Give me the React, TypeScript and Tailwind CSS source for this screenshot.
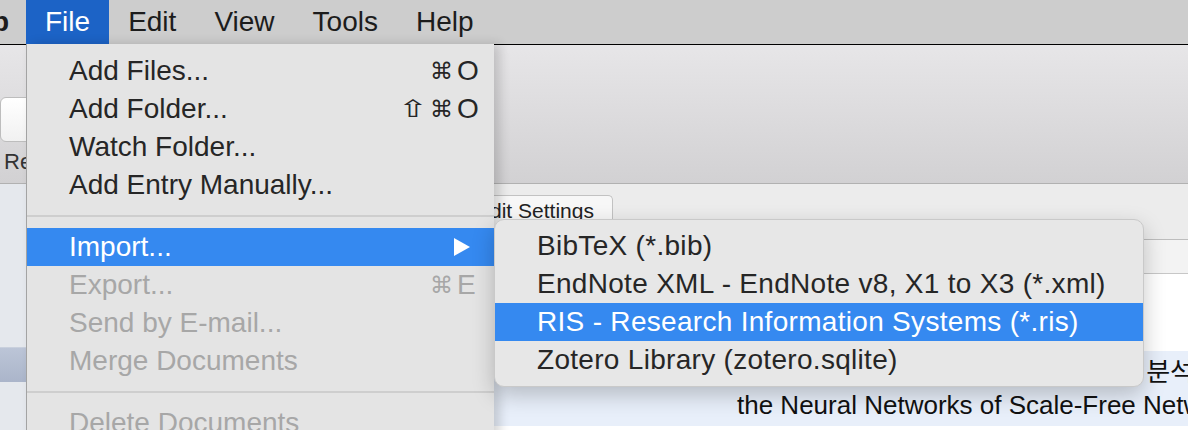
import React from 'react';

type MenuEntry =
  | { sep: true }
  | {
      sep?: false;
      label: string;
      mods?: string[];
      keyChar?: string;
      disabled?: boolean;
      active?: boolean;
      submenu?: boolean;
    };

const fileMenu: MenuEntry[] = [
  { label: 'Add Files...', mods: ['⌘'], keyChar: 'O' },
  { label: 'Add Folder...', mods: ['⇧', '⌘'], keyChar: 'O' },
  { label: 'Watch Folder...' },
  { label: 'Add Entry Manually...' },
  { sep: true },
  { label: 'Import...', active: true, submenu: true },
  { label: 'Export...', mods: ['⌘'], keyChar: 'E', disabled: true },
  { label: 'Send by E-mail...', disabled: true },
  { label: 'Merge Documents', disabled: true },
  { sep: true },
  { label: 'Delete Documents', disabled: true },
];

const importMenu = [
  { label: 'BibTeX (*.bib)' },
  { label: 'EndNote XML - EndNote v8, X1 to X3 (*.xml)' },
  { label: 'RIS - Research Information Systems (*.ris)', active: true },
  { label: 'Zotero Library (zotero.sqlite)' },
];

const menuBar = ['File', 'Edit', 'View', 'Tools', 'Help'];

// sidebar rows sit under the open menu, only their backgrounds show
const sidebarRows = ['library', 'all', 'recent', 'read', 'unsorted'];

function SubmenuArrow() {
  return (
    <svg width="18" height="18" viewBox="0 0 18 18" className="shrink-0">
      <polygon points="1,0 17,9 1,18" fill="white" />
    </svg>
  );
}

function FileMenu() {
  return (
    <div className="absolute left-[26px] top-[44px] h-[400px] w-[468px] border-l border-[#a3a3a3] bg-[#e4e4e4] pt-[8px] shadow-[6px_0_10px_rgba(0,0,0,0.16)]">
      {fileMenu.map((item, i) =>
        item.sep ? (
          <div key={i} className="flex h-[24px] items-center">
            <div className="h-[2px] w-full bg-[#cecece]" />
          </div>
        ) : (
          <div
            key={i}
            className={
              'flex h-[38px] items-center pl-[42px] pr-[15px] ' +
              (item.active
                ? 'bg-[#3589f0] text-white'
                : item.disabled
                  ? 'text-[#a7a7a7]'
                  : 'text-[#262626]')
            }
          >
            <span className="flex-1 whitespace-nowrap">{item.label}</span>
            {item.submenu && (
              <span className="pr-[8px]">
                <SubmenuArrow />
              </span>
            )}
            {item.keyChar && (
              <span className="flex items-center">
                {item.mods?.map((m) => (
                  <span
                    key={m}
                    className={
                      m === '⇧'
                        ? 'mr-[7px] inline-block scale-x-[1.5] text-[24px]'
                        : 'inline-block text-[23px]'
                    }
                  >
                    {m}
                  </span>
                ))}
                <span className="ml-[4px] w-[22px]">{item.keyChar}</span>
              </span>
            )}
          </div>
        ),
      )}
    </div>
  );
}

function ImportMenu() {
  return (
    <div className="absolute left-[494px] top-[219px] w-[650px] overflow-hidden rounded-[10px] border border-[#c9c9c9] bg-[#e7e7e7] py-[7px] tracking-[0.3px] shadow-[0_8px_22px_rgba(0,0,0,0.22)]">
      {importMenu.map((item) => (
        <div
          key={item.label}
          className={
            'flex h-[38px] items-center whitespace-nowrap pl-[42px] ' +
            (item.active ? 'bg-[#3589f0] text-white' : 'text-[#262626]')
          }
        >
          {item.label}
        </div>
      ))}
    </div>
  );
}

export default function App() {
  return (
    <div
      className="relative h-[430px] w-[1188px] overflow-hidden bg-[#ececec] text-[28px] leading-none"
      style={{ fontFamily: '"Liberation Sans", "DejaVu Sans", "Noto Sans CJK KR", sans-serif' }}
    >
      {/* Menu bar */}
      <div className="flex h-[44px] items-stretch bg-[#cdcdcd] text-[#1c1c1c]">
        <div className="flex w-[26px] shrink-0 items-center justify-end overflow-hidden">
          <span className="shrink-0 whitespace-nowrap pr-[17px] font-bold">Mendeley Desktop</span>
        </div>
        {menuBar.map((m) => (
          <div
            key={m}
            className={
              'flex items-center px-[19px] ' + (m === 'File' ? 'bg-[#1c63c6] text-white' : '')
            }
          >
            {m}
          </div>
        ))}
      </div>
      <div className="h-[1px] bg-black" />

      {/* Window behind the menus */}
      <div className="flex h-[139px] flex-col border-b border-[#b1b1b1] bg-gradient-to-b from-[#e7e6e8] to-[#d2d1d3]">
        <div className="mt-[52px] flex w-[84px] flex-col items-center">
          <div className="h-[45px] w-[84px] rounded-[6px] border border-[#bdbdbd] bg-gradient-to-b from-white to-[#f1f1f1]" />
          <span className="mt-[9px] text-[22px] text-[#333]">Related</span>
        </div>
      </div>

      <div className="flex h-[246px]">
        {/* Sidebar */}
        <div className="flex w-[300px] shrink-0 flex-col bg-[#e5e8ed] pt-[23px]">
          {sidebarRows.map((s) => (
            <div
              key={s}
              className={
                'h-[35px] shrink-0 ' +
                (s === 'unsorted'
                  ? 'border-t border-[#c9d0dd] bg-gradient-to-b from-[#bcc5d7] to-[#abb5ca]'
                  : '')
              }
            />
          ))}
        </div>

        {/* Main pane */}
        <div className="flex min-w-0 flex-1 flex-col bg-white">
          <div className="flex h-[56px] items-end border-b border-[#bdbdbd] bg-[#ececec] pl-[157px]">
            <div className="flex h-[44px] items-center rounded-t-[5px] border border-b-0 border-[#c2c2c2] bg-[#f7f7f7] px-[18px] pb-[14px] text-[21px] text-[#222]">
              Edit Settings
            </div>
          </div>
          <div className="h-[34px] border-b border-[#c7c7c7] bg-[#f3f3f3]" />
          <div className="h-[77px] bg-white" />
          <div className="flex h-[75px] flex-col bg-[#e8effa] pt-[4px] text-[26px] text-[#111]">
            <div className="mr-[-6px] flex h-[33px] items-center justify-end whitespace-nowrap">
              척도 없는 네트워크의 신경망 분석
            </div>
            <div className="flex h-[33px] items-center whitespace-nowrap pl-[437px]">
              the Neural Networks of Scale-Free Networks
            </div>
          </div>
        </div>
      </div>

      <FileMenu />
      <ImportMenu />
    </div>
  );
}
